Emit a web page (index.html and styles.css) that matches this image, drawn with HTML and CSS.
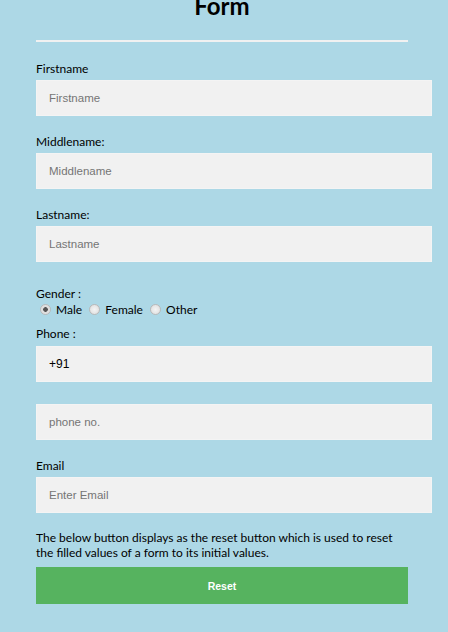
FILE: index.html
```html
<!DOCTYPE html>
<html lang="en">
<head>
<meta charset="utf-8">
<title>Form</title>
<link rel="stylesheet" href="styles.css">
</head>
<body>
<div class="page">
  <form class="form">
    <h1 class="title">Form</h1>
    <div class="rule"></div>

    <label class="label" for="fn">Firstname</label>
    <input class="field" id="fn" type="text" placeholder="Firstname">

    <label class="label" for="mn">Middlename:</label>
    <input class="field" id="mn" type="text" placeholder="Middlename">

    <label class="label" for="ln">Lastname:</label>
    <input class="field" id="ln" type="text" placeholder="Lastname">

    <div class="label gender">Gender :</div>
    <div class="radios"><input class="radio" type="radio" name="g" checked> Male <input class="radio" type="radio" name="g"> Female <input class="radio" type="radio" name="g"> Other</div>

    <label class="label phone-label" for="cc">Phone :</label>
    <input class="field code" id="cc" type="text" value="+91">
    <input class="field gap-top" type="text" placeholder="phone no.">

    <label class="label" for="em">Email</label>
    <input class="field" id="em" type="text" placeholder="Enter Email">

    <p class="note">The below button displays as the reset button which is used to reset the filled values of a form to its initial values.</p>
    <button class="reset" type="reset">Reset</button>
  </form>
</div>
</body>
</html>
```

FILE: styles.css
```css
html, body {
  margin: 0;
  padding: 0;
}
body {
  background: #ffc0cb;
  font-family: Lato, "Open Sans", sans-serif;
  color: #000;
}
.page {
  width: 448px;
  min-height: 632px;
  background: #add8e6;
  overflow: hidden;
}
.form {
  width: 372px;
  padding: 0 0 0 36px;
}
.title {
  margin: -8px 0 0 0;
  font-size: 24px;
  line-height: 28px;
  font-weight: 700;
  text-align: center;
}
.rule {
  margin-top: 20px;
  border: 1px solid #f1f1f1;
  margin-bottom: 18px;
}
.label {
  display: block;
  font-size: 12px;
  line-height: 16px;
  padding-top: 1px;
  margin-bottom: 3px;
}
.field {
  display: block;
  box-sizing: border-box;
  width: calc(100% + 24px);
  height: 36px;
  padding: 0 12px;
  margin: 0 0 17px 0;
  border: 1px solid #f4f4f4;
  background: #f1f1f1;
  font-family: "Liberation Sans", Arial, sans-serif;
  font-size: 11.5px;
  color: #000;
  outline: none;
}
.field::placeholder {
  color: #757575;
}
.code {
  font-size: 12px;
}
.gap-top {
  margin-top: 22px;
}
.gender {
  margin-top: 23px;
  margin-bottom: 0;
}
.radios {
  font-size: 12px;
  line-height: 16px;
  height: 16px;
}
.radio {
  appearance: none;
  -webkit-appearance: none;
  display: inline-block;
  vertical-align: -1px;
  width: 11px;
  height: 11px;
  margin: 0 2px 0 4px;
  border: 1px solid #b9b9b9;
  border-radius: 50%;
  background: radial-gradient(circle, #f4f4f4 0, #dcdcdc 100%);
  box-sizing: border-box;
}
.radio:checked {
  background: radial-gradient(circle, #555 0, #555 2px, #dcdcdc 2.6px, #e8e8e8 100%);
}
.phone-label {
  margin-top: 7px;
  margin-bottom: 4px;
}
.field.code {
  margin-bottom: 0;
}
.note {
  font-size: 12px;
  line-height: 15px;
  margin: 0 0 7px 0;
}
.reset {
  display: block;
  width: 100%;
  height: 37px;
  border: none;
  background: #56b35f;
  color: #fff;
  font-family: "Liberation Sans", Arial, sans-serif;
  font-weight: 700;
  font-size: 10.5px;
  padding: 0;
}
```
